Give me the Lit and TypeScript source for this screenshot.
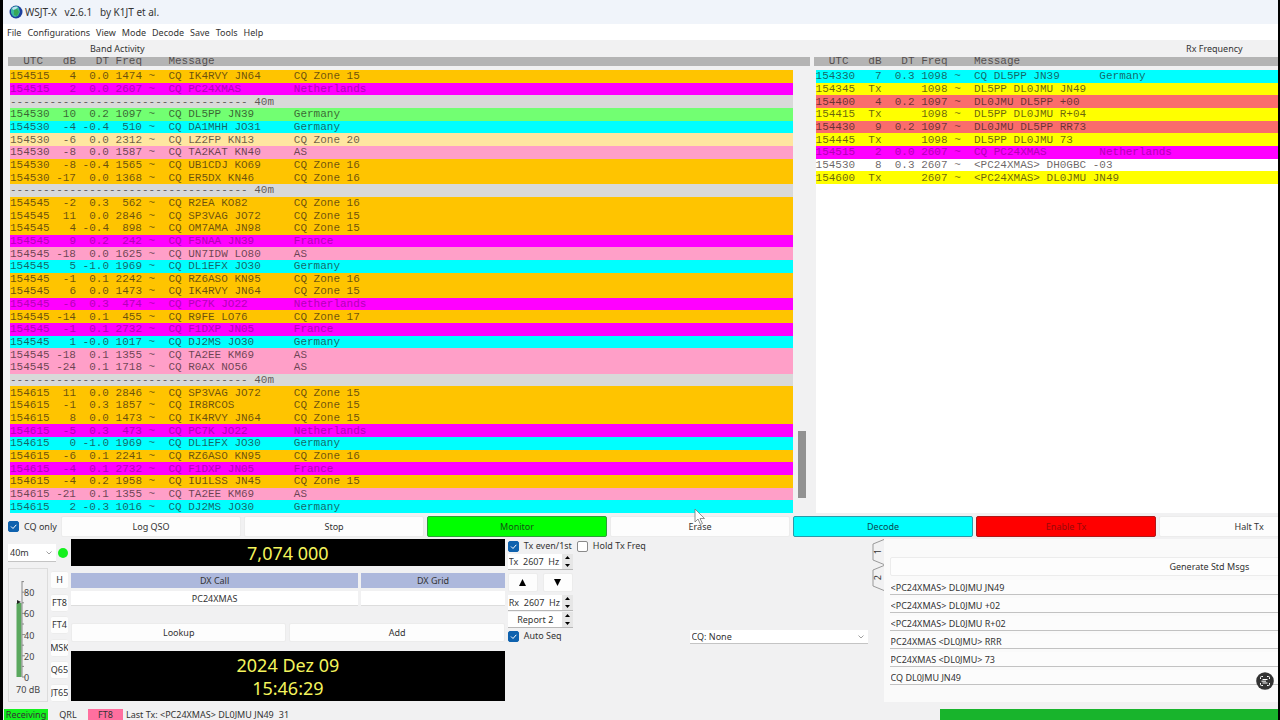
import { LitElement, html, css, svg } from "lit";
import { customElement, property } from "lit/decorators.js";

type Row = { kind: string; t?: string; db?: string; dt?: string; f?: string; msg?: string; loc?: string };

const parse = (line: string): Row => {
  const [kind, t, db, dt, f, msg, loc] = line.split("|");
  return { kind, t, db, dt, f, msg, loc };
};

const BAND: Row[] = `zone|154515|4|0.0|1474|CQ IK4RVY JN64|CQ Zone 15
dxcc|154515|2|0.0|2607|CQ PC24XMAS|Netherlands
sep
green|154530|10|0.2|1097|CQ DL5PP JN39|Germany
cyan|154530|-4|-0.4|510|CQ DA1MHH JO31|Germany
cream|154530|-6|0.0|2312|CQ LZ2FP KN13|CQ Zone 20
pink|154530|-8|0.0|1587|CQ TA2KAT KN40|AS
zone|154530|-8|-0.4|1565|CQ UB1CDJ KO69|CQ Zone 16
zone|154530|-17|0.0|1368|CQ ER5DX KN46|CQ Zone 16
sep
zone|154545|-2|0.3|562|CQ R2EA KO82|CQ Zone 16
zone|154545|11|0.0|2846|CQ SP3VAG JO72|CQ Zone 15
zone|154545|4|-0.4|898|CQ OM7AMA JN98|CQ Zone 15
dxcc|154545|9|0.2|242|CQ F5NAA JN39|France
pink|154545|-18|0.0|1625|CQ UN7IDW LO80|AS
cyan|154545|5|-1.0|1969|CQ DL1EFX JO30|Germany
zone|154545|-1|0.1|2242|CQ RZ6ASO KN95|CQ Zone 16
zone|154545|6|0.0|1473|CQ IK4RVY JN64|CQ Zone 15
dxcc|154545|-6|0.3|474|CQ PC7K JO22|Netherlands
zone|154545|-14|0.1|455|CQ R9FE LO76|CQ Zone 17
dxcc|154545|-1|0.1|2732|CQ F1DXP JN05|France
cyan|154545|1|-0.0|1017|CQ DJ2MS JO30|Germany
pink|154545|-18|0.1|1355|CQ TA2EE KM69|AS
pink|154545|-24|0.1|1718|CQ R0AX NO56|AS
sep
zone|154615|11|0.0|2846|CQ SP3VAG JO72|CQ Zone 15
zone|154615|-1|0.3|1857|CQ IR8RCOS|CQ Zone 15
zone|154615|8|0.0|1473|CQ IK4RVY JN64|CQ Zone 15
dxcc|154615|-5|0.3|473|CQ PC7K JO22|Netherlands
cyan|154615|0|-1.0|1969|CQ DL1EFX JO30|Germany
zone|154615|-6|0.1|2241|CQ RZ6ASO KN95|CQ Zone 16
dxcc|154615|-4|0.1|2732|CQ F1DXP JN05|France
zone|154615|-4|0.2|1958|CQ IU1LSS JN45|CQ Zone 15
pink|154615|-21|0.1|1355|CQ TA2EE KM69|AS
cyan|154615|2|-0.3|1016|CQ DJ2MS JO30|Germany`.split("\n").map(parse);

const RX: Row[] = `cyan|154330|7|0.3|1098|CQ DL5PP JN39|Germany
tx|154345|Tx||1098|DL5PP DL0JMU JN49|
mine|154400|4|0.2|1097|DL0JMU DL5PP +00|
tx|154415|Tx||1098|DL5PP DL0JMU R+04|
mine|154430|9|0.2|1097|DL0JMU DL5PP RR73|
tx|154445|Tx||1098|DL5PP DL0JMU 73|
dxcc|154515|2|0.0|2607|CQ PC24XMAS|Netherlands
plain|154530|8|0.3|2607|<PC24XMAS> DH0GBC -03|
tx|154600|Tx||2607|<PC24XMAS> DL0JMU JN49|`.split("\n").map(parse);

@customElement("decode-pane")
class DecodePane extends LitElement {
  @property() heading = "";
  @property({ attribute: false }) rows: Row[] = [];
  @property({ type: Boolean, reflect: true }) scrolled = false;

  static styles = css`
    :host { display: flex; flex-direction: column; min-width: 0; }
    .heading { height: 16px; line-height: 16px; text-align: center; color: #333; }
    :host([scrolled]) .heading { text-align: left; padding-left: 82px; }
    .log { flex: 1; display: grid; grid-template-columns: minmax(0, 1fr); min-height: 0; }
    table { grid-area: 1 / 1; display: flex; flex-direction: column; font: 11px/12px "Liberation Mono", monospace; }
    thead { display: block; height: 9px; margin-bottom: 4px; padding-left: 2px; background: #b4b4b4; overflow: hidden; color: #555; }
    thead tr { line-height: 9px; }
    tbody { flex: 1; display: grid; grid-template-rows: repeat(35, minmax(0, 1fr)); padding-left: 2px; background: #fff; background-clip: content-box; }
    :host([scrolled]) tbody { padding-right: 17px; }
    tr { display: grid; grid-template-columns: 6ch 4ch 5ch 5ch 4ch 19ch 1fr; align-items: center; color: rgba(30, 20, 20, 0.68); white-space: pre; }
    th, td { padding: 0; font-weight: normal; text-align: left; }
    .r { text-align: right; }
    .zone { background: #ffc400; }
    .dxcc { background: #ff00ff; color: #b400b8; }
    .green { background: #72ff72; }
    .cyan { background: #00ffff; }
    .cream { background: #ffe6a0; }
    .pink { background: #ff9fc8; }
    .tx { background: #ffff00; }
    .mine { background: #fa6c6c; }
    .plain { background: #fff; }
    .sep { background: #d9d9d9; grid-template-columns: 1fr; }
    .track { grid-area: 1 / 1; justify-self: end; width: 16px; margin-top: 9px; background: #f1f1f2; display: flex; flex-direction: column; justify-content: flex-end; align-items: center; }
    .thumb { width: 8px; height: 15%; margin-bottom: 15px; background: #929292; }
  `;

  row(r: Row) {
    if (r.kind === "sep") return html`<tr class="sep"><td>${"-".repeat(36)} 40m</td></tr>`;
    return html`<tr class=${r.kind}><td>${r.t}</td><td class="r">${r.db}</td><td class="r">${r.dt}</td><td class="r">${r.f}</td><td> ~</td><td>${r.msg}</td><td>${r.loc}</td></tr>`;
  }

  render() {
    return html`
      <div class="heading">${this.heading}</div>
      <div class="log">
        <table aria-label=${this.heading}>
          <thead><tr><th>  UTC</th><th class="r">dB</th><th class="r">DT</th><th class="r">Freq</th><th></th><th>Message</th><th></th></tr></thead>
          <tbody>${this.rows.map((r) => this.row(r))}</tbody>
        </table>
        ${this.scrolled ? html`<div class="track"><div class="thumb"></div></div>` : ""}
      </div>`;
  }
}

@customElement("spin-box")
class SpinBox extends LitElement {
  @property() value = "";
  @property() label = "";
  @property() align = "left";

  static styles = css`
    :host { display: flex; width: 65px; height: 15px; background: #fff; border-bottom: 1px solid #b8b8b8; }
    input { flex: 1; min-width: 0; border: 0; padding: 0 0 0 1px; background: none; font: inherit; color: #333; white-space: pre; }
    .center { text-align: center; }
    .steps { display: flex; flex-direction: column; width: 11px; background: #e6e6e6; }
    button { flex: 1; display: grid; place-items: center; border: 0; padding: 0; background: none; }
    svg { width: 5px; height: 3px; }
  `;

  render() {
    return html`
      <input class=${this.align} aria-label=${this.label} .value=${this.value} />
      <div class="steps">
        <button aria-label="Increase"><svg viewBox="0 0 5 3"><path d="M0 3L2.5 0L5 3Z" /></svg></button>
        <button aria-label="Decrease"><svg viewBox="0 0 5 3"><path d="M0 0L2.5 3L5 0Z" /></svg></button>
      </div>`;
  }
}

@customElement("app-root")
class AppRoot extends LitElement {
  static styles = css`
    :host { display: block; position: relative; height: 100vh; overflow: hidden; box-sizing: border-box; border-left: 3px solid #000; border-right: 2px solid #000; background: #f1f1f2; font: 9px/14px "Noto Sans", sans-serif; color: #333; }
    .window { display: flex; flex-direction: column; width: 126.6%; height: 100%; }
    button, input, select { font: inherit; color: inherit; box-sizing: border-box; margin: 0; }
    .title { display: flex; align-items: center; gap: 2px; height: 24px; padding-left: 6px; background: #f0f4fa; font-size: 10px; line-height: 24px; white-space: pre; }
    .title svg { width: 14px; height: 14px; }
    nav { display: flex; gap: 6px; height: 16px; padding-left: 4px; background: #fff; }
    nav button { border: 0; padding: 0; background: none; line-height: 15px; }
    .panes { flex: 1; min-height: 0; display: grid; grid-template-columns: 1fr 1fr; gap: 4px; padding: 1px 2px 0 5px; }
    .actions { display: grid; grid-template-columns: 50px repeat(8, minmax(0, 1fr)); gap: 3px; height: 21px; margin: 3px 95px 2px 5px; align-items: stretch; }
    .check { display: flex; align-items: center; gap: 5px; white-space: nowrap; }
    input[type="checkbox"] { appearance: none; width: 11px; height: 11px; border: 1px solid #8a8a8a; border-radius: 2px; background: #fff; }
    input[type="checkbox"]:checked { border-color: #0f62ae; background: #0f62ae url("data:image/svg+xml,%3Csvg xmlns='http://www.w3.org/2000/svg' viewBox='0 0 9 9'%3E%3Cpath d='M2 4.5L4 6.5L7.3 2.8' fill='none' stroke='%23fff'/%3E%3C/svg%3E"); }
    .btn { border: 1px solid #ececec; border-radius: 2px; padding: 0; background: #fdfdfd; overflow: hidden; white-space: nowrap; }
    .go { background: #00ff00; border-color: #2f9e3a; color: #145214; }
    .aqua { background: #00ffff; border-color: #2c9aa8; color: #0a4a50; }
    .stop { background: #ff0000; border-color: #b01818; color: #9a0808; }
    .lower { display: grid; grid-template-columns: 60px minmax(0, 434fr) minmax(0, 361fr) minmax(0, 744fr); gap: 3px; height: 163px; padding: 0 2px 0 5px; }
    .side { display: grid; grid-template: 28px 1fr / 40px 17px; column-gap: 3px; }
    .band { grid-column: span 2; display: flex; align-items: center; gap: 2px; }
    select { appearance: none; border: 0; border-bottom: 1px solid #c4c4c4; border-radius: 0; padding: 0 2px; background: #fff url("data:image/svg+xml,%3Csvg xmlns='http://www.w3.org/2000/svg' viewBox='0 0 6 4'%3E%3Cpath d='M.5 .5L3 3L5.5 .5' fill='none' stroke='%23888' stroke-width='.8'/%3E%3C/svg%3E") no-repeat right 4px center / 6px 4px; }
    .band select { width: 48px; height: 18px; }
    .dot { flex: none; width: 10px; height: 10px; border-radius: 50%; background: #14f01e; }
    .meter { display: flex; border: 1px solid #dcdcdc; margin-top: 1px; padding-top: 1px; }
    .meter svg { width: 38px; height: 130px; font: 9px "Noto Sans", sans-serif; fill: #444; }
    .modes { display: flex; flex-direction: column; justify-content: space-between; padding-top: 4px; }
    .modes .btn { display: flex; justify-content: center; align-items: center; height: 18px; border-width: 1px 0; }
    .station { display: flex; flex-direction: column; }
    .lcd { background: #000; color: #f4f45c; text-align: center; font-size: 18px; line-height: 23px; }
    .freq { height: 27px; line-height: 28px; }
    .clock { height: 50px; padding-top: 3px; box-sizing: border-box; }
    .dx { display: grid; grid-template-columns: 288fr 144fr; column-gap: 3px; margin-top: 7px; }
    .dx label { height: 15px; line-height: 15px; background: #adb8dc; text-align: center; margin-bottom: 3px; }
    .dx input { height: 15px; width: 100%; min-width: 0; border: 0; border-bottom: 1px solid #ddd; text-align: center; padding: 0; background: #fff; }
    .pair { display: grid; grid-template-columns: 1fr 1fr; gap: 3px; height: 19px; margin: 17px 0 9px; }
    .mid { display: flex; align-items: flex-start; justify-content: space-between; }
    .tuning { display: flex; flex-direction: column; align-items: flex-start; gap: 1px; }
    .checks { display: flex; gap: 5px; }
    .arrows { display: grid; grid-template-columns: 30px 30px; gap: 5px; height: 19px; margin: 2px 0; }
    .arrows .btn { display: grid; place-items: center; }
    .arrows svg { width: 7px; height: 7px; fill: #000; }
    .cq { width: 178px; height: 14px; margin: 91px 1px 0 0; }
    .std { display: flex; min-width: 0; }
    .tabs { flex: none; width: 12px; display: flex; flex-direction: column; }
    .tab { display: grid; place-items: center; height: 26px; border: 0; padding: 0; background: none; }
    .tab svg, .tab span { grid-area: 1 / 1; }
    .tab svg { width: 12px; height: 26px; fill: none; stroke: #999; }
    .tab span { writing-mode: sideways-lr; line-height: 10px; }
    .page { flex: 1; min-width: 0; padding: 18px 86px 0 6px; background: #fafafa; }
    .page .btn { width: 100%; height: 19px; margin-bottom: 4px; display: block; }
    .page input { display: block; width: 100%; height: 15px; margin-bottom: 3px; border: 0; border-bottom: 1px solid #c2c2c2; padding: 0 1px; background: #fcfcfc; }
    footer { display: flex; align-items: stretch; gap: 2px; height: 11px; margin-top: 7px; padding-left: 1px; line-height: 12px; white-space: pre; }
    footer span { text-align: center; }
    .state { width: 44px; background: #14f01e; }
    .qrl { width: 36px; }
    .mode { width: 35px; background: #ff6f9f; }
    .last { padding: 0 3px 0 1px; }
    .progress { width: 677px; margin-left: auto; background: #18b42c; }
    .cursor { position: absolute; left: 54.2%; top: 508px; width: 12px; height: 18px; }
    .scan { position: absolute; right: 4px; bottom: 30px; width: 18px; height: 18px; }
  `;

  meter() {
    const ticks = Array.from({ length: 10 }, (_, i) => 107 - i * 10.6);
    return html`<svg viewBox="0 0 38 130" role="img" aria-label="Input level 70 dB">
      <rect x="7.5" y="33" width="5" height="74" fill="#5aa85e" />
      <path d="M13 11V107" stroke="#888" />
      ${ticks.map((y, i) => svg`<path d=${`M13 ${y}h${i % 2 ? 2 : 3}`} stroke="#888" />`)}
      ${[0, 20, 40, 60, 80].map((n, i) => svg`<text x="15" y=${111 - i * 21.2}>${n}</text>`)}
      <path d="M8 30L12 32L8 34Z" fill="#222" />
      <text x="7" y="123">70 dB</text>
    </svg>`;
  }

  render() {
    const tab = svg`<path d="M12 .5L1 5V21L12 25.5" />`;
    return html`
      <div class="window">
        <div class="title">
          <svg viewBox="0 0 14 14"><circle cx="7" cy="7" r="6.5" fill="#1d3f9e" /><path d="M2 4Q4 1 8 1L10 3L11 7L9 11L6 12Q3 11 2 8Z" fill="#3bb8a0" /><path d="M5 5L8 4L10 7L8 11L5 10Z" fill="#39a657" /><path d="M3 3Q6 1 9 2L7 4L4 5Z" fill="#bfe3f2" /></svg>
          <span>WSJT-X   v2.6.1   by K1JT et al.</span>
        </div>
        <nav>${["File", "Configurations", "View", "Mode", "Decode", "Save", "Tools", "Help"].map((m) => html`<button>${m}</button>`)}</nav>
        <div class="panes">
          <decode-pane heading="Band Activity" scrolled .rows=${BAND}></decode-pane>
          <decode-pane heading="Rx Frequency" .rows=${RX}></decode-pane>
        </div>
        <div class="actions">
          <label class="check"><input type="checkbox" checked />CQ only</label>
          <button class="btn">Log QSO</button>
          <button class="btn">Stop</button>
          <button class="btn go">Monitor</button>
          <button class="btn">Erase</button>
          <button class="btn aqua">Decode</button>
          <button class="btn stop">Enable Tx</button>
          <button class="btn">Halt Tx</button>
        </div>
        <div class="lower">
          <div class="side">
            <div class="band"><select aria-label="Band"><option>40m</option></select><span class="dot"></span></div>
            <div class="meter">${this.meter()}</div>
            <div class="modes">${["H", "FT8", "FT4", "MSK", "Q65", "JT65"].map((m) => html`<button class="btn">${m}</button>`)}</div>
          </div>
          <div class="station">
            <div class="lcd freq">7,074 000</div>
            <div class="dx">
              <label for="call">DX Call</label><label for="grid">DX Grid</label>
              <input id="call" value="PC24XMAS" /><input id="grid" />
            </div>
            <div class="pair"><button class="btn">Lookup</button><button class="btn">Add</button></div>
            <div class="lcd clock">2024 Dez 09<br />15:46:29</div>
          </div>
          <div class="mid">
            <div class="tuning">
              <div class="checks">
                <label class="check"><input type="checkbox" checked />Tx even/1st</label>
                <label class="check"><input type="checkbox" />Hold Tx Freq</label>
              </div>
              <spin-box label="Tx frequency" value="Tx  2607  Hz"></spin-box>
              <div class="arrows">
                <button class="btn" aria-label="Tx to Rx"><svg viewBox="0 0 7 7"><path d="M0 7L3.5 0L7 7Z" /></svg></button>
                <button class="btn" aria-label="Rx to Tx"><svg viewBox="0 0 7 7"><path d="M0 0L3.5 7L7 0Z" /></svg></button>
              </div>
              <spin-box label="Rx frequency" value="Rx  2607  Hz"></spin-box>
              <spin-box label="Report" align="center" value="Report 2"></spin-box>
              <label class="check"><input type="checkbox" checked />Auto Seq</label>
            </div>
            <select class="cq" aria-label="CQ reply"><option>CQ: None</option></select>
          </div>
          <div class="std">
            <div class="tabs">
              <button class="tab"><svg viewBox="0 0 12 26">${tab}</svg><span>1</span></button>
              <button class="tab"><svg viewBox="0 0 12 26">${tab}</svg><span>2</span></button>
            </div>
            <div class="page">
              <button class="btn">Generate Std Msgs</button>
              ${["<PC24XMAS> DL0JMU JN49", "<PC24XMAS> DL0JMU +02", "<PC24XMAS> DL0JMU R+02", "PC24XMAS <DL0JMU> RRR", "PC24XMAS <DL0JMU> 73", "CQ DL0JMU JN49"].map((m, i) => html`<input aria-label=${`Tx ${i + 1}`} .value=${m} />`)}
            </div>
          </div>
        </div>
        <footer>
          <span class="state">Receiving</span><span class="qrl">QRL</span><span class="mode">FT8</span><span class="last">Last Tx: &lt;PC24XMAS&gt; DL0JMU JN49</span><span>31</span>
          <div class="progress" role="progressbar" aria-label="Period progress"></div>
        </footer>
      </div>
      <svg class="cursor" viewBox="0 0 12 18"><path d="M1 1V14L4 11L6.5 16.5L8.5 15.5L6 10.5H10.5Z" fill="#fff" stroke="#777" stroke-width=".8" /></svg>
      <svg class="scan" viewBox="0 0 18 18"><circle cx="9" cy="9" r="8.8" fill="#333" /><path d="M4.5 7V5.5Q4.5 4.5 5.5 4.5H7M11 4.5H12.5Q13.5 4.5 13.5 5.5V7M13.5 11V12.5Q13.5 13.5 12.5 13.5H11M7 13.5H5.5Q4.5 13.5 4.5 12.5V11M6.5 7.5H11.5M5.5 9.2H10M6.5 11H11.5" fill="none" stroke="#fff" /></svg>`;
  }
}
